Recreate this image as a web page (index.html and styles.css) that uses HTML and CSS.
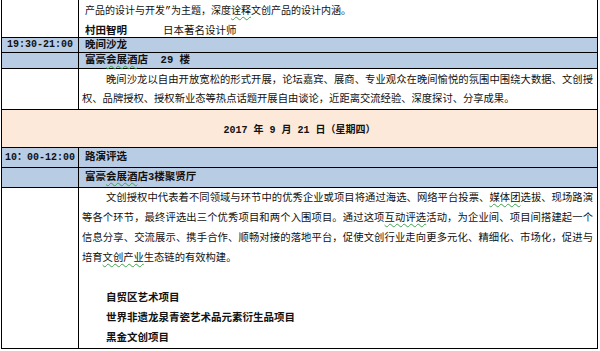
FILE: index.html
```html
<!DOCTYPE html>
<html lang="zh-CN">
<head>
<meta charset="utf-8">
<title>日程</title>
<link rel="stylesheet" href="styles.css">
</head>
<body>
<table class="schedule">
  <colgroup><col class="col-time"><col class="col-body"></colgroup>
  <tr class="row-cont">
    <td></td>
    <td class="intro">
      <div class="lead">产品的设计与开发”为主题，深度<span class="gram">诠释</span>文创产品的设计内涵。</div>
      <div class="speaker"><b>村田智明</b><span class="role">日本著名设计师</span></div>
    </td>
  </tr>
  <tr class="blue row-b">
    <td class="time">19:30-21:00</td>
    <td class="head">晚间沙龙</td>
  </tr>
  <tr class="blue row-c">
    <td></td>
    <td class="head">富豪<span class="gram">会展酒</span>店&nbsp; 29 楼</td>
  </tr>
  <tr class="row-d">
    <td></td>
    <td class="para"><p>晚间沙龙以自由开放宽松的形式开展，论坛嘉宾、展商、专业观众在晚间愉悦的氛围中围绕大数据、文创授权、品牌授权、授权新业态等热点话题开展自由谈论，近距离交流经验、深度探讨、分享成果。</p></td>
  </tr>
  <tr class="day">
    <td colspan="2">2017 年 9 月 21 日（星期四）</td>
  </tr>
  <tr class="blue row-f">
    <td class="time">10：00-12:00</td>
    <td class="head">路演评选</td>
  </tr>
  <tr class="blue row-f">
    <td></td>
    <td class="head">富豪<span class="gram">会展酒</span>店3楼聚贤厅</td>
  </tr>
  <tr class="row-h">
    <td></td>
    <td class="para">
      <p>文创授权中代表着不同领域与环节中的优秀企业或项目将通过海选、网络平台投票、<span class="gram">媒体团</span>选拔、现场路演等各个环节，最终评选出三个优秀项目和两个入围项目。通过这项<span class="gram">互动评选</span>活动，为企业间、项目间搭建起一个信息分享、交流展示、携手合作、顺畅对接的落地平台，促使文创行业走向更多元化、精细化、市场化，促进与培育<span class="gram">文创产业</span>生态链的有效构建。</p>
      <p class="blank">&nbsp;</p>
      <p class="item">自贸区艺术项目</p>
      <p class="item">世界非遗龙泉青瓷艺术品元素衍生品项目</p>
      <p class="item">黑金文创项目</p>
    </td>
  </tr>
</table>
</body>
</html>
```

FILE: styles.css
```css
html, body {
  margin: 0;
  padding: 0;
  background: #ffffff;
}

body {
  font-family: "Liberation Mono", "Noto Sans CJK SC", monospace;
  font-size: 10.3px;
  color: #111111;
  overflow: hidden;
}

.schedule {
  border-collapse: collapse;
  width: 597px;
  margin: -1px 0 0 1px;
  table-layout: fixed;
}

.col-time {
  width: 77px;
}

.schedule td {
  border: 1px solid #000000;
  padding: 0;
  vertical-align: top;
}

.blue td {
  background: #b8cce4;
}

.time {
  font-weight: bold;
  font-size: 10px;
  text-align: center;
}

.head {
  font-weight: bold;
  font-size: 10.5px;
  padding-left: 6px !important;
}

.row-b td { line-height: 14px; }
.row-c td { line-height: 15px; }
.row-f td { line-height: 19px; }

.intro {
  padding: 3px 3px 0 6px !important;
}

.lead {
  line-height: 18px;
  font-size: 10px;
}

.speaker {
  margin-top: 4px;
  line-height: 12px;
  font-size: 10.5px;
}

.speaker b {
  font-weight: bold;
}

.role {
  margin-left: 36px;
}

.para {
  padding: 0 4px 0 3px !important;
}

.para p {
  margin: 0;
  text-align: justify;
  text-indent: 24px;
}

.row-d .para {
  padding-top: 2px !important;
}

.row-d .para p {
  line-height: 19px;
}

.row-h .para p {
  line-height: 20px;
}

.para p.item {
  font-weight: bold;
  font-size: 10.5px;
  text-align: left;
}

.day td {
  background: #fde9d9;
  text-align: center;
  font-weight: bold;
  font-size: 10px;
  line-height: 20px;
  padding: 11px 0 6px 0;
}

.gram {
  text-decoration: underline wavy #3fa34d;
  text-decoration-thickness: 1px;
  text-underline-offset: 2px;
}
```
